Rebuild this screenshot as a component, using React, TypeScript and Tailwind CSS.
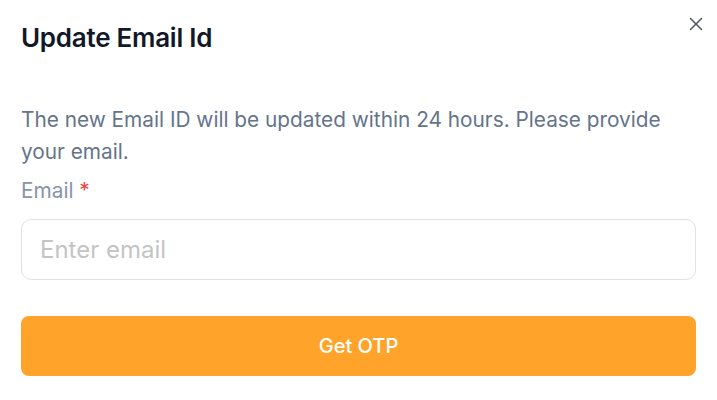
import { X } from 'lucide-react';

const App = () => {
  return (
    <div className="min-h-[400px] w-full bg-white font-['Inter',sans-serif]">
      <div className="relative px-[21px] pt-[24px]">
        <h2 className="text-[26px] font-semibold leading-[28px] tracking-[-0.01em] text-[#111827]">
          Update Email Id
        </h2>
        <button className="absolute right-[10px] top-[13px] text-[#4b5563]">
          <X size={22} strokeWidth={1.6} />
        </button>
        <p className="mt-[52px] text-[20.8px] leading-[32px] text-[#64748b]">
          The new Email ID will be updated within 24 hours. Please provide your
          email.
        </p>
        <label className="mt-[9px] block text-[20.8px] leading-[28px] text-[#8796a8]">
          Email <span className="text-[#ef4444]">*</span>
        </label>
        <input
          type="email"
          placeholder="Enter email"
          className="mt-[14px] h-[61px] w-full rounded-[10px] border border-[#e2e2e2] px-[18px] text-[24px] outline-none placeholder:text-[#c4c4c4]"
        />
        <button className="mt-[36px] h-[60px] w-full rounded-[8px] bg-[#ffa32a] text-[20px] font-medium text-white">
          Get OTP
        </button>
      </div>
    </div>
  );
};

export default App;
